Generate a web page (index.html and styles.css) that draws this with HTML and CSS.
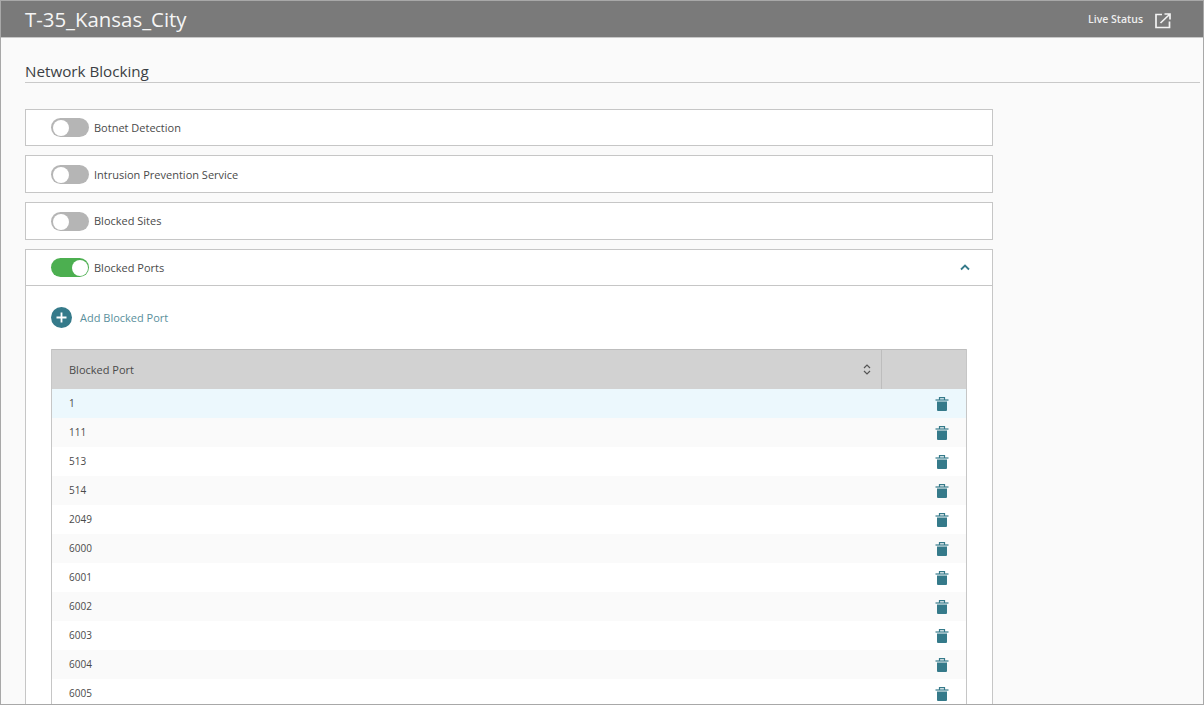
FILE: index.html
```html
<!DOCTYPE html>
<html lang="en">
<head>
<meta charset="utf-8">
<title>Network Blocking</title>
<link rel="stylesheet" href="styles.css">
</head>
<body>
<div class="window">
  <header class="topbar">
    <h1 class="device">T-35_Kansas_City</h1>
    <a class="live">Live Status
      <svg class="live-icon" width="16" height="16" viewBox="0 0 16 16" fill="none" stroke="#f2f2f2" stroke-width="1.7"><path d="M7 1.5H1v13h13.5V8.5"/><path d="M5.5 10 14.5 1.5M9.5 1h5.5v5.5"/></svg>
    </a>
  </header>
  <main class="content">
    <h2 class="page-title">Network Blocking</h2>
    <div class="panels">
      <section class="card"><div class="card-head"><span class="toggle"></span><span>Botnet Detection</span></div></section>
      <section class="card"><div class="card-head"><span class="toggle"></span><span>Intrusion Prevention Service</span></div></section>
      <section class="card"><div class="card-head"><span class="toggle"></span><span class="lifted">Blocked Sites</span></div></section>
      <section class="card">
        <div class="card-head short"><span class="toggle on"></span><span>Blocked Ports</span>
          <svg class="chevron" width="10" height="7" viewBox="0 0 10 7" fill="none" stroke="#357a8a" stroke-width="1.8"><path d="M1 5.5 5 1.5l4 4"/></svg>
        </div>
        <div class="card-body">
          <div class="add">
            <svg width="21" height="21" viewBox="0 0 21 21"><circle cx="10.5" cy="10.5" r="10.5" fill="#357a8a"/><path d="M10.5 5.5v10M5.5 10.5h10" stroke="#fff" stroke-width="1.8"/></svg>
            <span>Add Blocked Port</span>
          </div>
          <div class="table">
            <div class="thead">
              <div class="th-main">Blocked Port
                <svg width="8" height="11" viewBox="0 0 8 11" fill="none" stroke="#555" stroke-width="1.2"><path d="M1 4l3-3 3 3M1 7l3 3 3-3"/></svg>
              </div>
              <div class="th-action"></div>
            </div>
            <div class="row selected"><span>1</span><svg class="trash" viewBox="0 0 14 14"><use href="#trash"/></svg></div>
            <div class="row alt"><span>111</span><svg class="trash" viewBox="0 0 14 14"><use href="#trash"/></svg></div>
            <div class="row"><span>513</span><svg class="trash" viewBox="0 0 14 14"><use href="#trash"/></svg></div>
            <div class="row alt"><span>514</span><svg class="trash" viewBox="0 0 14 14"><use href="#trash"/></svg></div>
            <div class="row"><span>2049</span><svg class="trash" viewBox="0 0 14 14"><use href="#trash"/></svg></div>
            <div class="row alt"><span>6000</span><svg class="trash" viewBox="0 0 14 14"><use href="#trash"/></svg></div>
            <div class="row"><span>6001</span><svg class="trash" viewBox="0 0 14 14"><use href="#trash"/></svg></div>
            <div class="row alt"><span>6002</span><svg class="trash" viewBox="0 0 14 14"><use href="#trash"/></svg></div>
            <div class="row"><span>6003</span><svg class="trash" viewBox="0 0 14 14"><use href="#trash"/></svg></div>
            <div class="row alt"><span>6004</span><svg class="trash" viewBox="0 0 14 14"><use href="#trash"/></svg></div>
            <div class="row"><span>6005</span><svg class="trash" viewBox="0 0 14 14"><use href="#trash"/></svg></div>
          </div>
        </div>
      </section>
    </div>
  </main>
</div>
<svg class="defs" width="0" height="0"><defs><g id="trash"><path d="M2 4.5h10V13a1 1 0 0 1-1 1H3a1 1 0 0 1-1-1z" fill="#357a8a"/><path d="M0.5 3h13" stroke="#357a8a" stroke-width="1.2"/><path d="M4.5 3V0.7h5V3" fill="none" stroke="#357a8a" stroke-width="1.2"/></g></defs></svg>
</body>
</html>
```
FILE: styles.css
```css
* { box-sizing: border-box; }
html, body { margin: 0; height: 705px; overflow: hidden; }
body { font-family: "Open Sans", sans-serif; color: #444; background: #fafafa; }
.window { height: 705px; border: 1px solid #a8a8a8; overflow: hidden; background: #fafafa; }
.topbar { height: 37px; background: #7a7a7a; border-bottom: 1px solid #c8c8c8; display: flex; align-items: center; justify-content: space-between; padding: 0 32px 0 24px; color: #fff; }
.device { margin: 0; font-size: 20.4px; font-weight: 400; line-height: 36px; color: #f5f5f5; }
.live { display: flex; align-items: center; gap: 12px; font-size: 10.5px; font-weight: 600; color: #eee; }
.live-icon { display: block; margin-top: 3px; }
.content { padding: 23px 3px 0 24px; }
.page-title { margin: 0; height: 21px; font-size: 15.2px; font-weight: 400; line-height: 21px; color: #3b3f44; border-bottom: 1px solid #c9c9c9; box-sizing: content-box; }
.panels { margin-top: 26px; width: 968px; display: flex; flex-direction: column; gap: 9px; }
.card { background: #fff; border: 1px solid #c6c6c6; }
.card-head { height: 36px; display: flex; align-items: center; gap: 5px; padding: 0 22px 0 25px; font-size: 11px; color: #4a4a4a; }
.card:first-child .card-head, .card-head.short { height: 35px; }
.lifted { margin-bottom: 1px; }
.chevron { margin-left: auto; }
.toggle { position: relative; width: 38px; height: 19px; border-radius: 10px; background: #b5b5b5; flex: none; }
.toggle::after { content: ""; position: absolute; left: 2px; top: 2px; width: 16px; height: 16px; border-radius: 50%; background: #fff; }
.toggle.on { background: #4caf50; }
.toggle.on::after { left: 21px; }
.card-body { border-top: 1px solid #c6c6c6; padding: 21px 25px 0; }
.add { display: flex; align-items: center; gap: 8px; height: 21px; font-size: 11px; color: #5a8f9c; }
.table { margin-top: 21px; width: 916px; border-left: 1px solid #c6c6c6; border-right: 1px solid #c6c6c6; }
.thead { display: flex; height: 40px; background: #d2d2d2; border-top: 1px solid #bdbdbd; font-size: 11px; color: #4a4a4a; }
.th-main { flex: 1; display: flex; align-items: center; justify-content: space-between; padding: 0 10px 0 17px; border-right: 1px solid #bdbdbd; }
.th-action { width: 84px; }
.row { height: 29px; display: flex; align-items: center; justify-content: space-between; padding: 0 17px; font-size: 10px; color: #4a4a4a; background: #fff; }
.row span { margin-bottom: 2px; }
.row.alt { background: #fafafa; }
.row.selected { background: #ecf8fd; }
.trash { width: 14px; height: 14px; }
.defs { position: absolute; }
```
